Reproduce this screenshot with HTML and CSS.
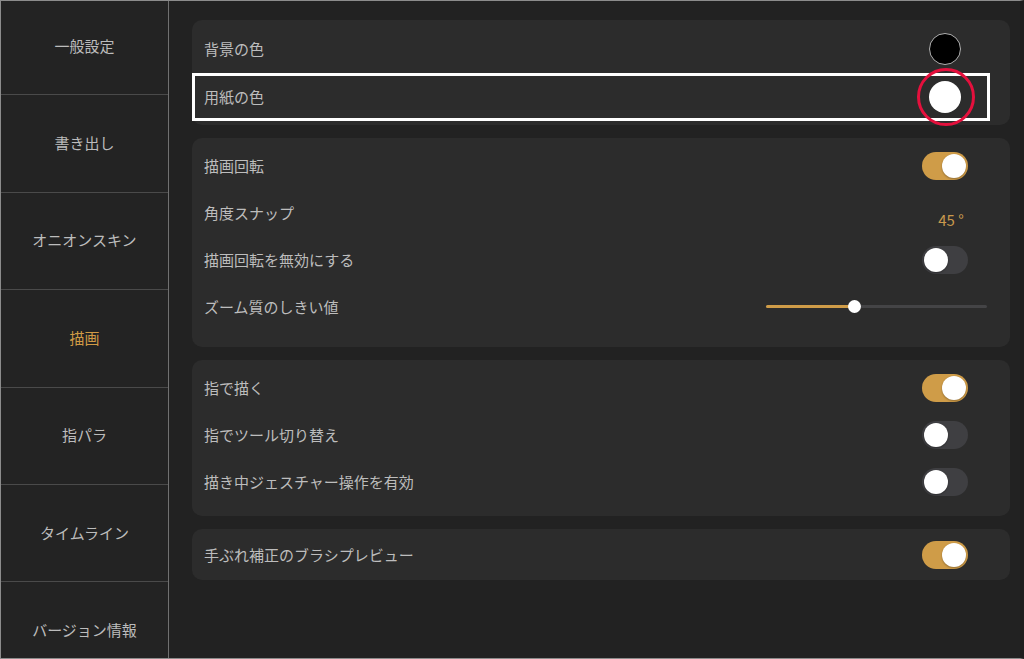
FILE: index.html
```html
<!DOCTYPE html>
<html lang="ja">
<head>
    <meta charset="UTF-8">
    <meta name="viewport" content="width=device-width, initial-scale=1.0">
    <title>設定</title>
    <link rel="stylesheet" href="styles.css">
</head>
<body>

<div class="screen">
    <nav class="sidebar">
        <div class="menu">
            <div class="menu-item">一般設定</div>
            <div class="menu-item">書き出し</div>
            <div class="menu-item">オニオンスキン</div>
            <div class="menu-item active">描画</div>
            <div class="menu-item">指パラ</div>
            <div class="menu-item">タイムライン</div>
            <div class="menu-item">バージョン情報</div>
        </div>
    </nav>

    <main class="content">
        <section class="card card-colors">
            <div class="row">
                <span class="label">背景の色</span>
                <div class="control"><span class="swatch swatch-black"></span></div>
            </div>
            <div class="row row-marked">
                <span class="label">用紙の色</span>
                <div class="control"><span class="swatch swatch-white"></span></div>
                <span class="mark-box"></span>
                <span class="mark-circle"></span>
            </div>
        </section>

        <section class="card card-rotate">
            <div class="row">
                <span class="label">描画回転</span>
                <div class="control"><span class="toggle on"></span></div>
            </div>
            <div class="row">
                <span class="label">角度スナップ</span>
                <div class="control"><span class="value">45 °</span></div>
            </div>
            <div class="row">
                <span class="label">描画回転を無効にする</span>
                <div class="control"><span class="toggle"></span></div>
            </div>
            <div class="row">
                <span class="label">ズーム質のしきい値</span>
                <div class="slider">
                    <span class="slider-fill" style="width: 88px"></span>
                    <span class="slider-knob" style="left: 88px"></span>
                </div>
            </div>
        </section>

        <section class="card card-finger">
            <div class="row">
                <span class="label">指で描く</span>
                <div class="control"><span class="toggle on"></span></div>
            </div>
            <div class="row">
                <span class="label">指でツール切り替え</span>
                <div class="control"><span class="toggle"></span></div>
            </div>
            <div class="row">
                <span class="label">描き中ジェスチャー操作を有効</span>
                <div class="control"><span class="toggle"></span></div>
            </div>
        </section>

        <section class="card card-preview">
            <div class="row">
                <span class="label">手ぶれ補正のブラシプレビュー</span>
                <div class="control"><span class="toggle on"></span></div>
            </div>
        </section>
    </main>
</div>

</body>
</html>
```

FILE: styles.css
```css
* {
    box-sizing: border-box;
}
html, body {
    margin: 0;
    padding: 0;
    height: 100%;
}
body {
    font-family: "Noto Sans CJK JP", "Noto Sans", sans-serif;
    font-size: 15px;
    color: #bdbdbd;
    background: #222222;
    overflow: hidden;
}
.screen {
    display: flex;
    width: 1024px;
    height: 659px;
    border-top: 1px solid #8c8c8c;
    border-left: 1px solid #8c8c8c;
    border-bottom: 1px solid #8c8c8c;
    border-right: 4px solid #1d1d1d;
    background: #222222;
}
.sidebar {
    width: 168px;
    flex: none;
    background: #232323;
    border-right: 1px solid #707070;
    overflow: hidden;
}
.menu {
    margin-top: -3px;
}
.menu-item {
    height: 97.4px;
    padding-bottom: 2px;
    border-bottom: 1px solid #4a4a4a;
    display: flex;
    align-items: center;
    justify-content: center;
    color: #bcbcbc;
}
.menu-item.active {
    color: #d09a45;
}
.content {
    flex: 1;
    padding: 19px 10px 0 23px;
    display: flex;
    flex-direction: column;
    gap: 13px;
}
.card {
    background: #2c2c2c;
    border-radius: 10px;
    padding: 4px 0;
}
.card-colors {
    padding: 5px 0 4px;
}
.card-rotate {
    padding: 4px 0 17px;
}
.card-finger {
    padding: 4px 0 11px;
}
.card-preview {
    padding: 2px 0 2px;
}
.row {
    position: relative;
    height: 47px;
    display: flex;
    align-items: center;
    justify-content: space-between;
    padding: 0 42px 0 12px;
}
.card-colors .row {
    height: 48px;
}
.label {
    color: #bdbdbd;
    padding-bottom: 1px;
}
.control {
    width: 46px;
    display: flex;
    justify-content: center;
}
.swatch {
    width: 32px;
    height: 32px;
    border-radius: 50%;
}
.swatch-black {
    background: #000;
    border: 1.5px solid #b0b0b0;
}
.swatch-white {
    background: #fff;
}
.mark-box {
    position: absolute;
    left: 0;
    right: 20px;
    top: 0;
    bottom: 0;
    border: 3px solid #ffffff;
}
.mark-circle {
    position: absolute;
    right: 35px;
    top: -5px;
    width: 58px;
    height: 58px;
    border: 3px solid #e5103d;
    border-radius: 50%;
}
.toggle {
    position: relative;
    width: 46px;
    height: 28px;
    border-radius: 14px;
    background: #3f3f42;
}
.toggle::after {
    content: "";
    position: absolute;
    top: 2px;
    left: 2px;
    width: 24px;
    height: 24px;
    border-radius: 50%;
    background: #ffffff;
    box-shadow: 0 1px 2px rgba(0, 0, 0, 0.3);
}
.toggle.on {
    background: #cf9c48;
}
.toggle.on::after {
    left: 20px;
}
.value {
    color: #c9994d;
    margin-top: 14px;
    margin-left: 12px;
}
.slider {
    position: relative;
    width: 221px;
    height: 3px;
    margin-right: -19px;
    background: #444446;
    border-radius: 2px;
}
.slider-fill {
    position: absolute;
    left: 0;
    top: 0;
    height: 3px;
    background: #cf9c48;
    border-radius: 2px;
}
.slider-knob {
    position: absolute;
    top: -5px;
    width: 13px;
    height: 13px;
    margin-left: -6px;
    border-radius: 50%;
    background: #ffffff;
}
```
